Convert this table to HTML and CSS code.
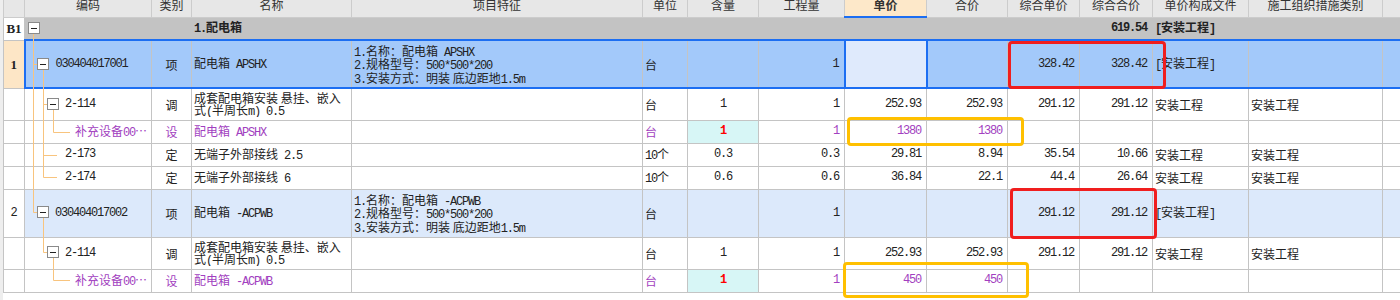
FILE: index.html
```html
<!DOCTYPE html>
<html lang="zh-CN">
<head>
<meta charset="utf-8">
<title>分部分项</title>
<link rel="stylesheet" href="styles.css">
</head>
<body>
<div class="sheet">
<table class="grid">
<colgroup>
<col class="w-rn"><col class="w-code"><col class="w-type"><col class="w-name"><col class="w-feat"><col class="w-unit"><col class="w-qty"><col class="w-amt"><col class="w-price"><col class="w-total"><col class="w-cprice"><col class="w-ctotal"><col class="w-file"><col class="w-cat"><col class="w-end">
</colgroup>
<thead>
<tr class="hdr">
<th></th><th>编码</th><th>类别</th><th>名称</th><th>项目特征</th><th>单位</th><th>含量</th><th>工程量</th><th class="hcur">单价</th><th>合价</th><th>综合单价</th><th>综合合价</th><th>单价构成文件</th><th>施工组织措施类别</th><th></th>
</tr>
</thead>
<tbody>
<tr class="grp r23">
<td class="rn">B1</td><td></td><td></td><td class="b"><span class="m">1.</span>配电箱</td><td></td><td></td><td></td><td></td><td></td><td></td><td></td><td class="num b">619.54</td><td class="b"><span class="m">[</span>安装工程<span class="m">]</span></td><td></td><td></td>
</tr>
<tr class="sel r48">
<td class="rn peach">1</td><td class="lv1 m">030404017001</td><td class="c">项</td><td>配电箱<span class="m"> APSHX</span></td>
<td class="feat"><div><span class="m">1.</span>名称：配电箱<span class="m"> APSHX</span></div><div><span class="m">2.</span>规格型号：<span class="m">500*500*200</span></div><div><span class="m">3.</span>安装方式：明装 底边距地<span class="m">1.5m</span></div></td>
<td>台</td><td></td><td class="num">1</td><td class="cur"></td><td></td><td class="num">328.42</td><td class="num">328.42</td><td><span class="m">[</span>安装工程<span class="m">]</span></td><td></td><td></td>
</tr>
<tr class="r32">
<td class="rn"></td><td class="lv2 m">2-114</td><td class="c">调</td><td class="two"><div>成套配电箱安装 悬挂、嵌入</div><div>式<span class="m">(</span>半周长<span class="m">m) 0.5</span></div></td><td></td>
<td>台</td><td class="num c">1</td><td class="num">1</td><td class="num">252.93</td><td class="num">252.93</td><td class="num">291.12</td><td class="num">291.12</td><td>安装工程</td><td>安装工程</td><td></td>
</tr>
<tr class="r23 pu">
<td class="rn"></td><td class="lv3">补充设备<span class="m">00</span>…</td><td class="c">设</td><td>配电箱<span class="m"> APSHX</span></td><td></td>
<td>台</td><td class="num c red cyan">1</td><td class="num">1</td><td class="num">1380</td><td class="num">1380</td><td></td><td></td><td></td><td></td><td></td>
</tr>
<tr class="r23">
<td class="rn"></td><td class="lv2 m">2-173</td><td class="c">定</td><td>无端子外部接线<span class="m"> 2.5</span></td><td></td>
<td><span class="m">10</span>个</td><td class="num c">0.3</td><td class="num">0.3</td><td class="num">29.81</td><td class="num">8.94</td><td class="num">35.54</td><td class="num">10.66</td><td>安装工程</td><td>安装工程</td><td></td>
</tr>
<tr class="r23">
<td class="rn"></td><td class="lv2 m">2-174</td><td class="c">定</td><td>无端子外部接线<span class="m"> 6</span></td><td></td>
<td><span class="m">10</span>个</td><td class="num c">0.6</td><td class="num">0.6</td><td class="num">36.84</td><td class="num">22.1</td><td class="num">44.4</td><td class="num">26.64</td><td>安装工程</td><td>安装工程</td><td></td>
</tr>
<tr class="lb r48">
<td class="rn plain">2</td><td class="lv1 m">030404017002</td><td class="c">项</td><td>配电箱<span class="m"> -ACPWB</span></td>
<td class="feat"><div><span class="m">1.</span>名称：配电箱<span class="m"> -ACPWB</span></div><div><span class="m">2.</span>规格型号：<span class="m">500*500*200</span></div><div><span class="m">3.</span>安装方式：明装 底边距地<span class="m">1.5m</span></div></td>
<td>台</td><td></td><td class="num">1</td><td></td><td></td><td class="num">291.12</td><td class="num">291.12</td><td><span class="m">[</span>安装工程<span class="m">]</span></td><td></td><td></td>
</tr>
<tr class="r32">
<td class="rn"></td><td class="lv2 m">2-114</td><td class="c">调</td><td class="two"><div>成套配电箱安装 悬挂、嵌入</div><div>式<span class="m">(</span>半周长<span class="m">m) 0.5</span></div></td><td></td>
<td>台</td><td class="num c">1</td><td class="num">1</td><td class="num">252.93</td><td class="num">252.93</td><td class="num">291.12</td><td class="num">291.12</td><td>安装工程</td><td>安装工程</td><td></td>
</tr>
<tr class="r23 pu">
<td class="rn"></td><td class="lv3">补充设备<span class="m">00</span>…</td><td class="c">设</td><td>配电箱<span class="m"> -ACPWB</span></td><td></td>
<td>台</td><td class="num c red cyan">1</td><td class="num">1</td><td class="num">450</td><td class="num">450</td><td></td><td></td><td></td><td></td><td></td>
</tr>
</tbody>
</table>

<svg class="tree" viewBox="24 0 127 300" width="127" height="300" aria-hidden="true">
<path class="tline" d="M33.5 34V212.5H37M33.5 64.5H37M43.5 70V177.5H57M43.5 104.5H47M43.5 155.5H57M53.5 110V132.5H70M43.5 218V252.5H47M53.5 258V280.5H70"/>
<g class="tbox">
<rect x="28.5" y="22.5" width="11" height="11"/>
<rect x="37.5" y="58.5" width="11" height="11"/>
<rect x="47.5" y="98.5" width="11" height="11"/>
<rect x="37.5" y="206.5" width="11" height="11"/>
<rect x="47.5" y="246.5" width="11" height="11"/>
</g>
<path class="tminus" d="M31 28.5H37M40 64.5H46M50 104.5H56M40 212.5H46M50 252.5H56"/>
</svg>

<div class="mark red-mark m1"></div>
<div class="mark red-mark m2"></div>
<div class="mark yel-mark y1"></div>
<div class="mark yel-mark y2"></div>
</div>
</body>
</html>
```

FILE: styles.css
```css
* { box-sizing: border-box; }

body {
  margin: 0;
  background: #ffffff;
  font-family: "Noto Sans CJK SC", sans-serif;
  font-size: 12px;
  color: #222222;
}

.sheet {
  position: relative;
  height: 300px;
  overflow: hidden;
  padding-left: 3px;
  background: linear-gradient(to right, #eeeeee 3px, #ffffff 3px);
}

.grid {
  border-collapse: collapse;
  table-layout: fixed;
  width: 1397px;
  margin-top: -7px;
}

.w-rn { width: 21px; }
.w-code { width: 127px; }
.w-type { width: 40px; }
.w-name { width: 160px; }
.w-feat { width: 291px; }
.w-unit { width: 45px; }
.w-qty { width: 71px; }
.w-amt { width: 86px; }
.w-price { width: 82px; }
.w-total { width: 81px; }
.w-cprice { width: 72px; }
.w-ctotal { width: 73px; }
.w-file { width: 96px; }
.w-cat { width: 134px; }
.w-end { width: 18px; }

.grid th,
.grid td {
  border: 1px solid #c4c4c4;
  padding: 0 2px;
  white-space: nowrap;
  overflow: hidden;
  vertical-align: middle;
  line-height: 13px;
  text-align: left;
}

.grid .hdr th {
  height: 24px;
  background: #e7e7e7;
  font-weight: normal;
  color: #333333;
  text-align: center;
  border-top: none;
  border-color: #cccccc;
}

.grid .hdr th.hcur {
  background: #fde8c9;
  font-weight: bold;
  border-bottom: 2px solid #1c6ef2;
}

.r23 > td { height: 23px; }
.r32 > td { height: 32px; }
.r48 > td { height: 48px; }

.m,
.num {
  font-family: "Liberation Mono", monospace;
  font-size: 12px;
  letter-spacing: -1.2px;
}

.grid td.num { text-align: right; padding-right: 5px; }
.grid td.c { text-align: center; padding: 0 2px; }
.b { font-weight: bold; }

.grid td.rn {
  text-align: center;
  padding: 0;
  font-family: "Liberation Serif", serif;
  font-weight: bold;
  font-size: 13px;
  background: #ffffff;
}

.grid td.plain {
  font-family: "Liberation Mono", monospace;
  font-weight: normal;
  font-size: 12px;
}

.grid td.lv1 { padding-left: 30px; }
.grid td.lv2 { padding-left: 40px; }
.grid td.lv3 { padding-left: 50px; }

.feat div {
  height: 13.5px;
  line-height: 13.5px;
  overflow: hidden;
}

.two div {
  height: 12.5px;
  line-height: 12.5px;
  overflow: hidden;
}

/* B1 group row */
.grid .grp td {
  background: #c3c3c3;
  border-color: #c3c3c3;
}
.grid .grp td.rn { background: #ffffff; border-color: #c4c4c4; }

/* selected row */
.grid .sel td {
  background: #a3c9fa;
  border-top: 2px solid #1c6ef2;
  border-bottom: 2px solid #1c6ef2;
}
.grid .sel td.rn {
  background: #fde6c6;
  border-top: 1px solid #c4c4c4;
  border-bottom: 1px solid #c4c4c4;
  border-right: 2px solid #1c6ef2;
}
.grid .sel td.cur {
  background: #dfeafc;
  border-left: 2px solid #1c6ef2;
  border-right: 2px solid #1c6ef2;
}

/* light blue item row */
.grid .lb td { background: #dce9fb; }
.grid .lb td.rn { background: #ffffff; }

.grid .pu td { color: #a23fc0; }
.grid .pu td.red { color: #ff0000; font-weight: bold; font-size: 12px; }
.grid td.cyan { background: #d7f6f6; }

/* tree connectors */
.tree {
  position: absolute;
  left: 24px;
  top: 0;
  pointer-events: none;
}
.tline { stroke: #f8c47e; stroke-width: 1; fill: none; }
.tbox rect { fill: #ffffff; stroke: #8a8a8a; stroke-width: 1; }
.tminus { stroke: #222222; stroke-width: 1; fill: none; }

/* annotation marks */
.mark {
  position: absolute;
  border: 3px solid;
  border-radius: 4px;
  pointer-events: none;
}
.red-mark { border-color: #f01e1e; }
.yel-mark { border-color: #ffc000; }
.m1 { left: 1008px; top: 41px; width: 158px; height: 48px; }
.m2 { left: 1010px; top: 188px; width: 147px; height: 51px; }
.y1 { left: 847px; top: 117px; width: 177px; height: 29px; }
.y2 { left: 843px; top: 262px; width: 186px; height: 36px; }
```
